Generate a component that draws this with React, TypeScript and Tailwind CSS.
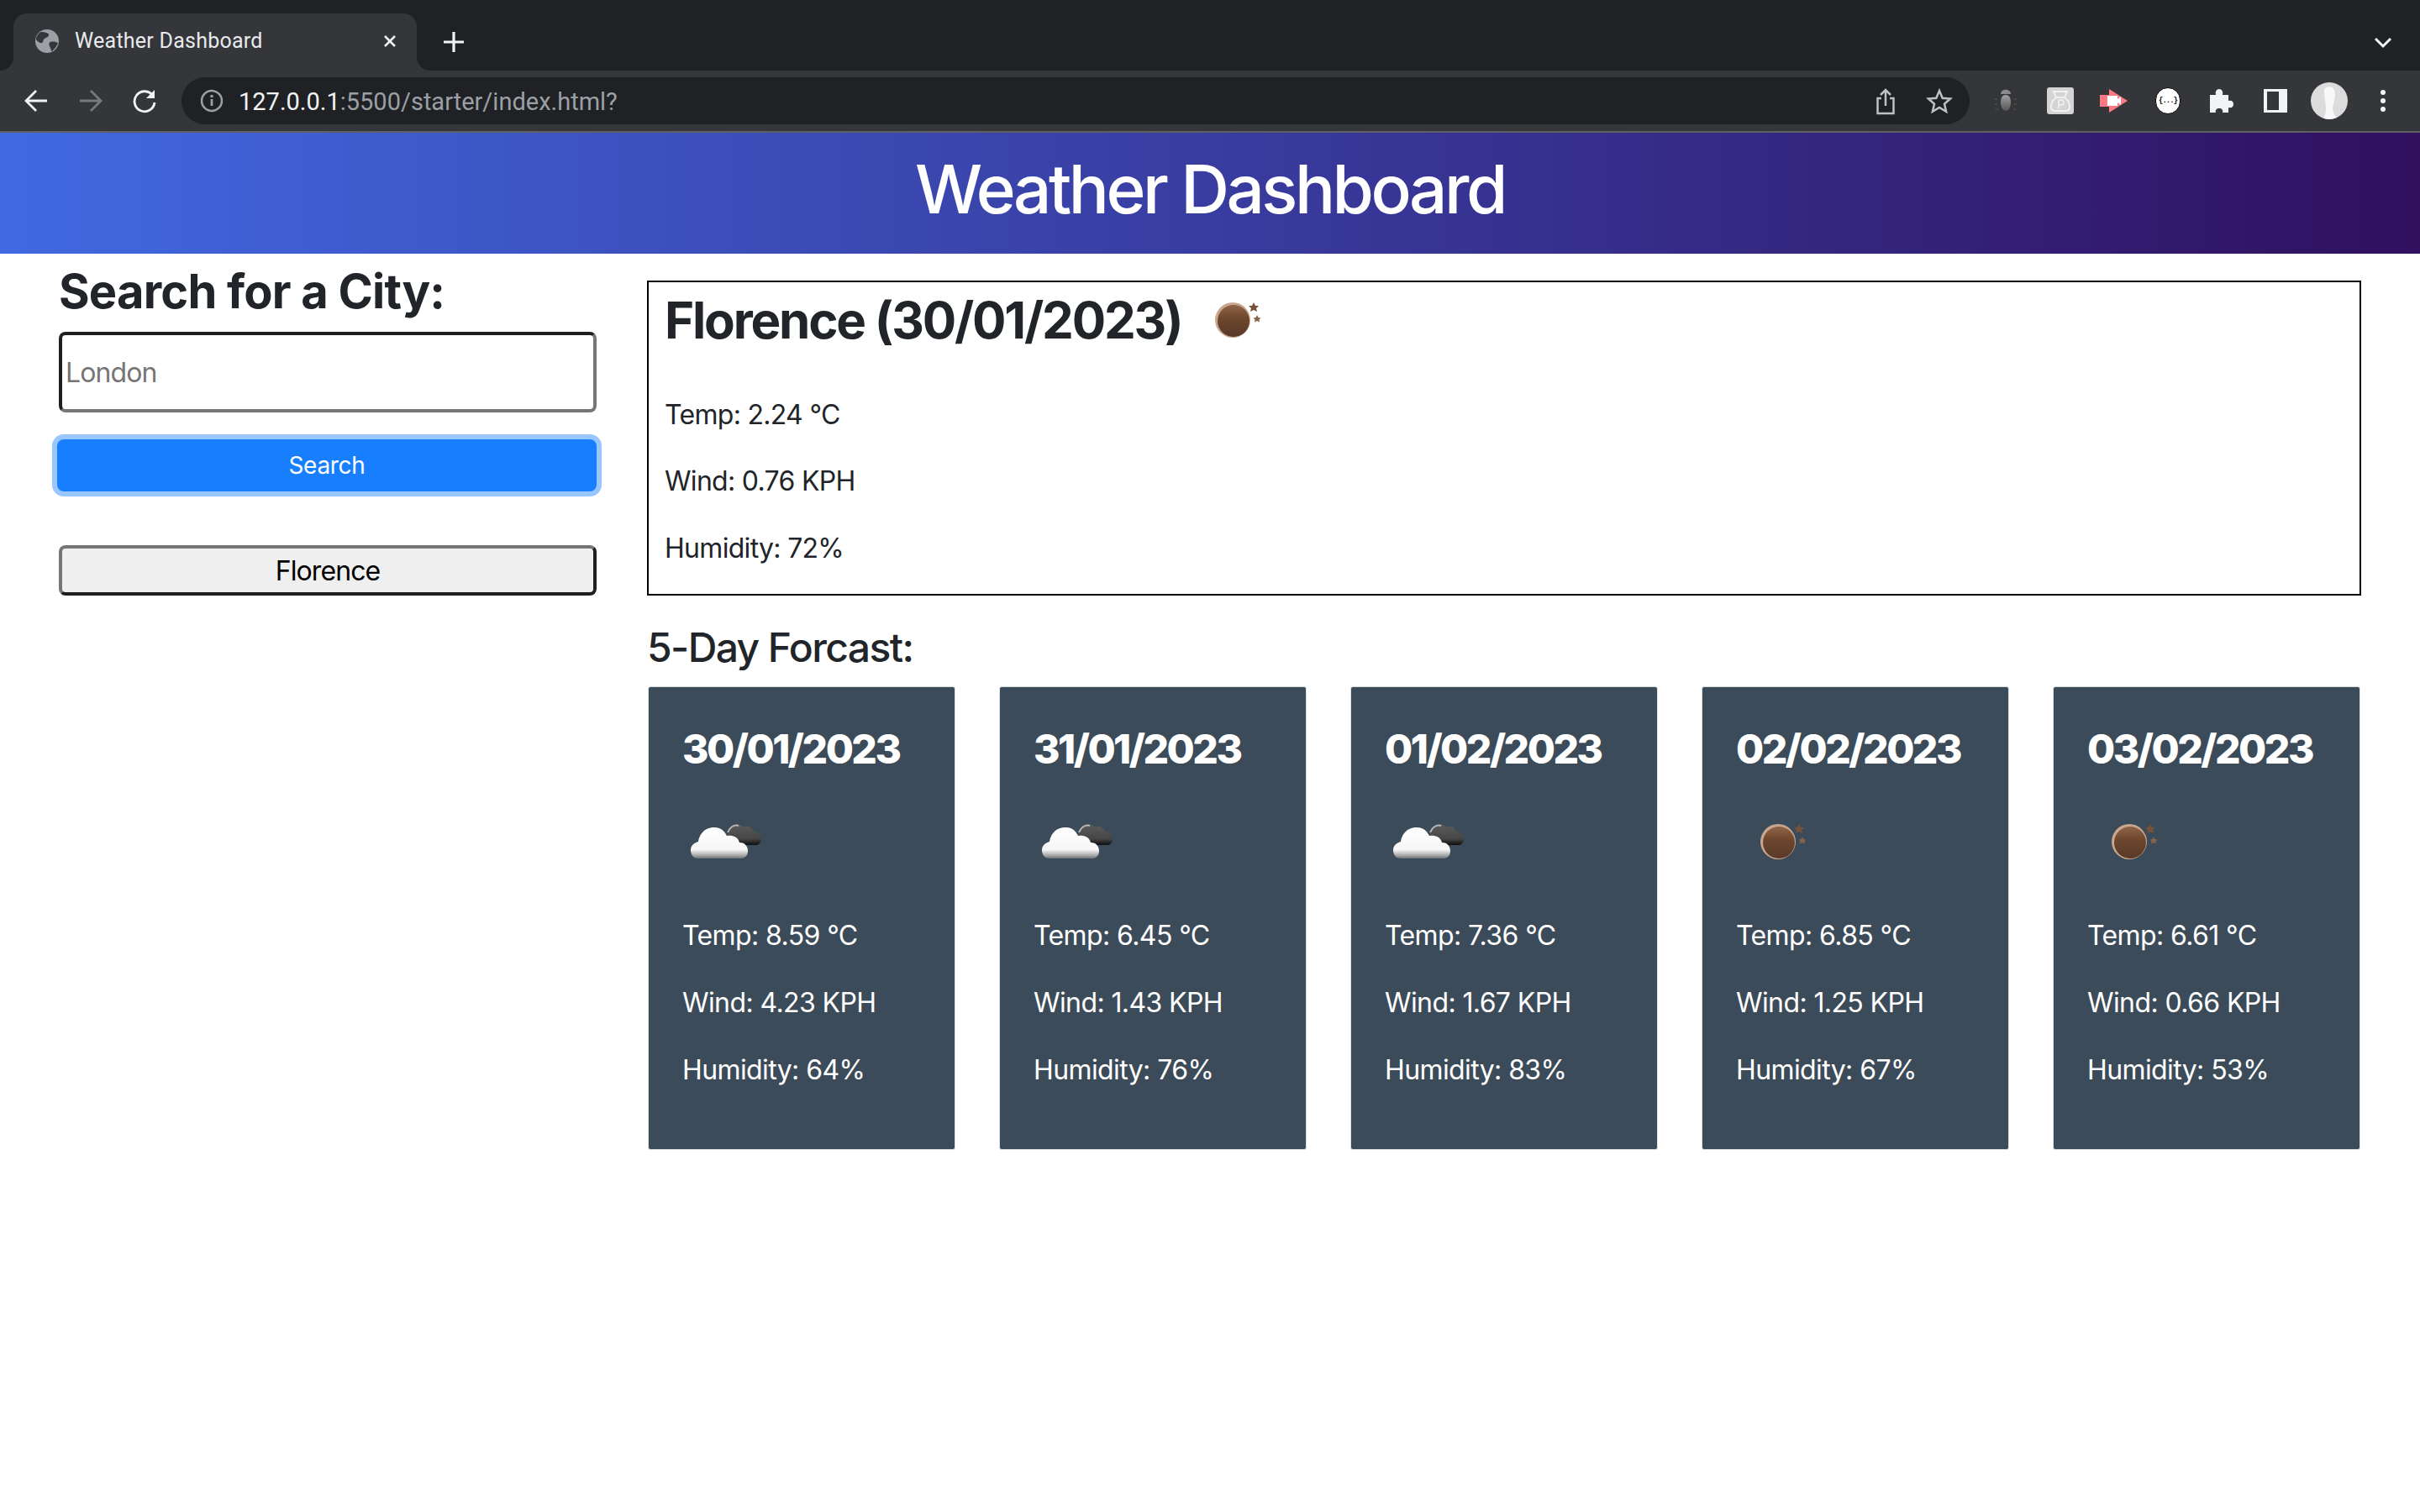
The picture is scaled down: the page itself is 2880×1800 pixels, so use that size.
import React from "react";

const days = [
  { date: "30/01/2023", temp: "8.59", wind: "4.23", hum: "64", cloud: true },
  { date: "31/01/2023", temp: "6.45", wind: "1.43", hum: "76", cloud: true },
  { date: "01/02/2023", temp: "7.36", wind: "1.67", hum: "83", cloud: true },
  { date: "02/02/2023", temp: "6.85", wind: "1.25", hum: "67", cloud: false },
  { date: "03/02/2023", temp: "6.61", wind: "0.66", hum: "53", cloud: false },
];

function Moon() {
  return (
    <svg width="56" height="48" viewBox="0 0 56 48" className="block">
      <defs>
        <linearGradient id="moonG" x1="0" y1="0" x2="0" y2="1">
          <stop offset="0" stopColor="#8f6548" />
          <stop offset="0.4" stopColor="#6e472d" />
          <stop offset="1" stopColor="#59392a" />
        </linearGradient>
      </defs>
      <circle cx="21" cy="25" r="21" fill="#c9a78f" />
      <circle cx="22" cy="26" r="19" fill="url(#moonG)" />
      <path d="M46 4l2 4 4 0-3 3 1 4-4-2-4 2 1-4-3-3 4 0z" fill="#75513a" />
      <path d="M50 19l1.500 3 3 .5-2 2 .5 3-3-1.500-3 1.500.5-3-2-2 3-.5z" fill="#87634b" />
    </svg>
  );
}

function Cloud() {
  return (
    <svg width="86" height="46" viewBox="0 0 86 46" className="block">
      <defs>
        <linearGradient id="cloudD" x1="0" y1="0" x2="0" y2="1">
          <stop offset="0" stopColor="#5c5c5c" />
          <stop offset="0.7" stopColor="#454545" />
          <stop offset="1" stopColor="#0d0d0d" />
        </linearGradient>
        <linearGradient id="cloudW" x1="0" y1="0" x2="0" y2="1">
          <stop offset="0" stopColor="#ffffff" />
          <stop offset="0.72" stopColor="#f6f6f6" />
          <stop offset="0.9" stopColor="#a8a8a8" />
          <stop offset="1" stopColor="#6d7276" />
        </linearGradient>
      </defs>
      <path d="M44 12c3-9 14-11 19-5 4-2 10-1 12 5 6 0 9 5 9 9 0 4-3 7-6 7H50z" fill="url(#cloudD)" />
      <path d="M44 13c2-6 8-10 13-8" fill="none" stroke="#b4b8bb" strokeWidth="2" />
      <path d="M9 44C2 44 0 38 0 34c0-6 5-9 9-10 1-7 6-17 19-17 9 0 13 6 15 10 5-1 13 0 15 8 7 0 10 5 10 10 0 6-4 9-9 9z" fill="url(#cloudW)" />
    </svg>
  );
}

function Card(d: (typeof days)[number]) {
  return (
    <div className="w-[366px] h-[552px] rounded-[3px] bg-[#3c4b59] border border-[#dfe2e5] text-white pl-[40px] pt-[45px]">
      <h4 className="m-0 text-[48px] leading-[58px] font-extrabold tracking-[-2.500px]">{d.date}</h4>
      <div className="h-[54px] mt-[53px] flex items-center">
        {d.cloud ? (
          <div className="ml-[10px]"><Cloud /></div>
        ) : (
          <div className="ml-[29px]"><Moon /></div>
        )}
      </div>
      <p className="mt-[62px] text-[32px] leading-[48px] tracking-[-0.600px]">Temp: {d.temp} °C</p>
      <p className="mt-[32px] text-[32px] leading-[48px] tracking-[-0.600px]">Wind: {d.wind} KPH</p>
      <p className="mt-[32px] text-[32px] leading-[48px] tracking-[-0.600px]">Humidity: {d.hum}%</p>
    </div>
  );
}

function Tabs() {
  return (
    <div className="h-[84px] bg-[#202124] flex items-end relative">
      <div className="ml-[16px] w-[480px] h-[68px] bg-[#35363a] rounded-t-[16px] flex items-center relative">
        <svg width="16" height="16" viewBox="0 0 16 16" className="absolute -left-[16px] bottom-0">
          <path d="M16 0v16H0A16 16 0 0 0 16 0z" fill="#35363a" />
        </svg>
        <svg width="16" height="16" viewBox="0 0 16 16" className="absolute -right-[16px] bottom-0">
          <path d="M0 0v16h16A16 16 0 0 1 0 0z" fill="#35363a" />
        </svg>
        <svg width="30" height="30" viewBox="0 0 30 30" className="ml-[25px] mb-[2px]">
          <circle cx="15" cy="15" r="14" fill="#9aa0a6" />
          <path d="M8 4c4 0 8 1 9 3s-3 4-5 5-1 4-3 5-6-2-7-4 3-8 6-9zM28 17c-2-1-6-2-9-1s-1 5 0 7 1 5 2 4 6-6 7-10z" fill="#35363a" />
        </svg>
        <span className="ml-[18px] mb-[2px] text-[25px] leading-[30px] tracking-[0.250px] text-[#e8eaed] font-['Roboto',sans-serif]">Weather Dashboard</span>
        <svg width="18" height="18" viewBox="0 0 18 18" className="absolute left-[439px] top-[24px]">
          <path d="M3 3l12 12M15 3L3 15" stroke="#f1f3f4" strokeWidth="2.500" />
        </svg>
      </div>
      <svg width="26" height="26" viewBox="0 0 26 26" className="ml-[31px] mb-[21px]">
        <path d="M13 1v24M1 13h24" stroke="#f1f3f4" strokeWidth="3.200" />
      </svg>
      <svg width="22" height="14" viewBox="0 0 22 14" className="absolute right-[33px] top-[44px]">
        <path d="M2 2l9 9 9-9" fill="none" stroke="#f1f3f4" strokeWidth="3" />
      </svg>
    </div>
  );
}

function Toolbar() {
  return (
    <div className="h-[74px] bg-[#35363a] border-b-2 border-[#5f6063] flex items-center relative">
      <svg width="28" height="28" viewBox="0 0 28 28" className="ml-[29px]">
        <path d="M27 14H3M14 2L2 14l12 12" fill="none" stroke="#f1f3f4" strokeWidth="2.800" />
      </svg>
      <svg width="28" height="28" viewBox="0 0 28 28" className="ml-[37px]">
        <path d="M1 14h24M14 2l12 12-12 12" fill="none" stroke="#77797c" strokeWidth="2.800" />
      </svg>
      <svg width="30" height="30" viewBox="0 0 30 30" className="ml-[35px]">
        <path d="M25 9A12 12 0 1 0 27 17" fill="none" stroke="#f1f3f4" strokeWidth="2.800" />
        <path d="M27 2v10H17z" fill="#f1f3f4" />
      </svg>
      <div className="ml-[29px] w-[2128px] h-[56px] rounded-full bg-[#202124] flex items-center relative">
        <svg width="28" height="28" viewBox="0 0 28 28" className="ml-[22px]">
          <circle cx="14" cy="14" r="12" fill="none" stroke="#9aa0a6" strokeWidth="2.500" />
          <path d="M14 12v8" stroke="#9aa0a6" strokeWidth="2.800" />
          <circle cx="14" cy="8.500" r="1.800" fill="#9aa0a6" />
        </svg>
        <span className="ml-[18px] pt-[2px] text-[29px] leading-[36px] font-['Roboto',sans-serif] text-[#f1f3f4]">
          127.0.0.1<span className="text-[#9aa0a6]">:5500/starter/index.html?</span>
        </span>
        <svg width="26" height="32" viewBox="0 0 26 32" className="absolute left-[2015px] top-[13px]">
          <path d="M8 12H3.500v18h19V12H18M13 21V2M7 8l6-6 6 6" fill="none" stroke="#bdc1c6" strokeWidth="2.500" />
        </svg>
        <svg width="32" height="30" viewBox="0 0 32 30" className="absolute left-[2076px] top-[13px]">
          <path d="M16 3l3.700 8.700 9.300.8-7 6.200 2.100 9.100-8.100-4.900-8.100 4.900 2.100-9.100-7-6.200 9.300-.8z" fill="none" stroke="#bdc1c6" strokeWidth="2.500" />
        </svg>
      </div>
      <Ext />
    </div>
  );
}

function Ext() {
  return (
    <div className="absolute left-0 top-0 h-full w-full pointer-events-none">
      <svg width="28" height="28" viewBox="0 0 28 28" className="absolute left-[2373px] top-[22px]">
        <defs>
          <linearGradient id="bug" x1="0" y1="0" x2="0" y2="1">
            <stop offset="0" stopColor="#a0a0a0" />
            <stop offset="1" stopColor="#555" />
          </linearGradient>
        </defs>
        <path d="M8 6c0-7 12-7 12 0z" fill="#8a8a8a" />
        <path d="M14 7c4 0 6 3 6 9s-3 10-6 10-6-4-6-10 2-9 6-9z" fill="url(#bug)" />
        <path d="M1 12h3M24 12h3M1 18h3M24 18h3M2 24h3M23 24h3" stroke="#555" strokeWidth="1.200" />
      </svg>
      <div className="absolute left-[2436px] top-[20px] w-[32px] h-[32px] rounded-[3px] bg-[#d4d4d4]">
        <svg width="32" height="32" viewBox="0 0 32 32" className="block">
          <path d="M8 5h16l-3 7H11zM11 12c-4 3-6 7-6 11 0 4 2 5 5 5h12c3 0 5-1 5-5 0-4-2-8-6-11" fill="none" stroke="#f2f2f2" strokeWidth="1.800" />
          <path d="M14 25V15h3a3 3 0 0 1 0 6h-3" fill="none" stroke="#f2f2f2" strokeWidth="1.500" />
        </svg>
      </div>
      <svg width="34" height="28" viewBox="0 0 34 28" className="absolute left-[2499px] top-[22px]">
        <path d="M11 0l22 14-22 14z" fill="#ff7b83" />
        <path d="M0 7h11v14H0z" fill="#ff7b83" />
        <path d="M9 8h12v4l4-3v10l-4-3v4H9z" fill="#fff" />
      </svg>
      <div className="absolute left-[2565px] top-[20px] w-[30px] h-[32px] rounded-full bg-white border border-black flex items-center justify-center text-black text-[9px] leading-none font-bold tracking-[-1px] font-['Liberation_Mono',monospace]">
        {"{...}"}
      </div>
      <svg width="30" height="30" viewBox="0 0 30 30" className="absolute left-[2629px] top-[21px]">
        <path d="M1 8h7c-1-4 1-7 4-7s5 3 4 7h7v7c4-1 6 1 6 4s-2 5-6 4v6H16c1-3-1-5-4-5s-5 2-4 5H1z" fill="#f1f3f4" />
      </svg>
      <div className="absolute left-[2694px] top-[22px] w-[28px] h-[28px] bg-[#f1f3f4] flex">
        <div className="ml-[4px] mt-[3px] w-[14px] h-[22px] bg-[#35363a]" />
      </div>
      <div className="absolute left-[2750px] top-[14px] w-[44px] h-[44px] rounded-full bg-[#dcdcdc] overflow-hidden">
        <svg width="44" height="44" viewBox="0 0 44 44" className="block">
          <path d="M16 10c0-6 10-6 12-1s0 15-2 20c0 6 2 10 6 15H14c4-6 4-9 4-13 0-6-2-14-2-21z" fill="#f7f8fa" />
        </svg>
      </div>
      <div className="absolute left-[2833px] top-[23px] flex flex-col gap-[4px]">
        <div className="w-[6px] h-[6px] rounded-full bg-[#f1f3f4]" />
        <div className="w-[6px] h-[6px] rounded-full bg-[#f1f3f4]" />
        <div className="w-[6px] h-[6px] rounded-full bg-[#f1f3f4]" />
      </div>
    </div>
  );
}

export default function App() {
  return (
    <div className="w-[2880px] h-[1800px] bg-white overflow-hidden text-[#212529] font-['Inter',sans-serif]">
      <Tabs />
      <Toolbar />
      <header className="h-[144px] pb-[10px] bg-[linear-gradient(to_right,#4169e1,#30105f)] flex items-center justify-center text-white text-[80px] leading-[96px] font-medium tracking-[-3.500px]">
        Weather Dashboard
      </header>
      <div className="flex gap-[60px] px-[70px]">
        <aside className="w-[640px] shrink-0">
          <h2 className="mt-[12px] text-[56px] leading-[66px] font-bold tracking-[-0.8px]">Search for a City:</h2>
          <input
            placeholder="London"
            className="mt-[15px] block w-full h-[96px] px-[4px] rounded-[8px] border-4 border-t-[#1f1f1f] border-l-[#1f1f1f] border-r-[#767676] border-b-[#767676] text-[32px] tracking-[-0.900px] placeholder:text-[#757575] outline-none"
          />
          <button className="mt-[32px] -ml-[2px] block w-[642px] h-[62px] rounded-[8px] bg-[#177ffe] text-white text-[28px] leading-[42px] tracking-[-0.300px] shadow-[0_0_0_6px_#98c7ff]">
            Search
          </button>
          <button className="mt-[64px] block w-full h-[60px] pt-[2px] rounded-[8px] bg-[#efefef] border-4 border-t-[#767676] border-l-[#767676] border-r-[#1f1f1f] border-b-[#1f1f1f] text-black text-[32px] leading-[40px] tracking-[-0.900px]">
            Florence
          </button>
        </aside>
        <main className="flex-1 min-w-0 pt-[32px]">
          <section className="h-[375px] border-2 border-black pl-[19px] pt-[13px]">
            <div className="flex items-center h-[64px]">
              <h1 className="text-[60px] leading-[72px] font-bold tracking-[-2.200px]">Florence (30/01/2023)</h1>
              <div className="ml-[39px] -mt-[3px]"><Moon /></div>
            </div>
            <p className="mt-[57px] text-[32px] leading-[48px] tracking-[-0.700px]">Temp: 2.24 °C</p>
            <p className="mt-[31px] text-[32px] leading-[48px] tracking-[-0.700px]">Wind: 0.76 KPH</p>
            <p className="mt-[32px] text-[32px] leading-[48px] tracking-[-0.700px]">Humidity: 72%</p>
          </section>
          <h3 className="mt-[33px] text-[48px] leading-[58px] font-medium tracking-[-1.600px]">5-Day Forcast:</h3>
          <div className="mt-[17px] pl-[1px] flex gap-[52px]">
            {days.map((d) => (
              <Card key={d.date} {...d} />
            ))}
          </div>
        </main>
      </div>
    </div>
  );
}
